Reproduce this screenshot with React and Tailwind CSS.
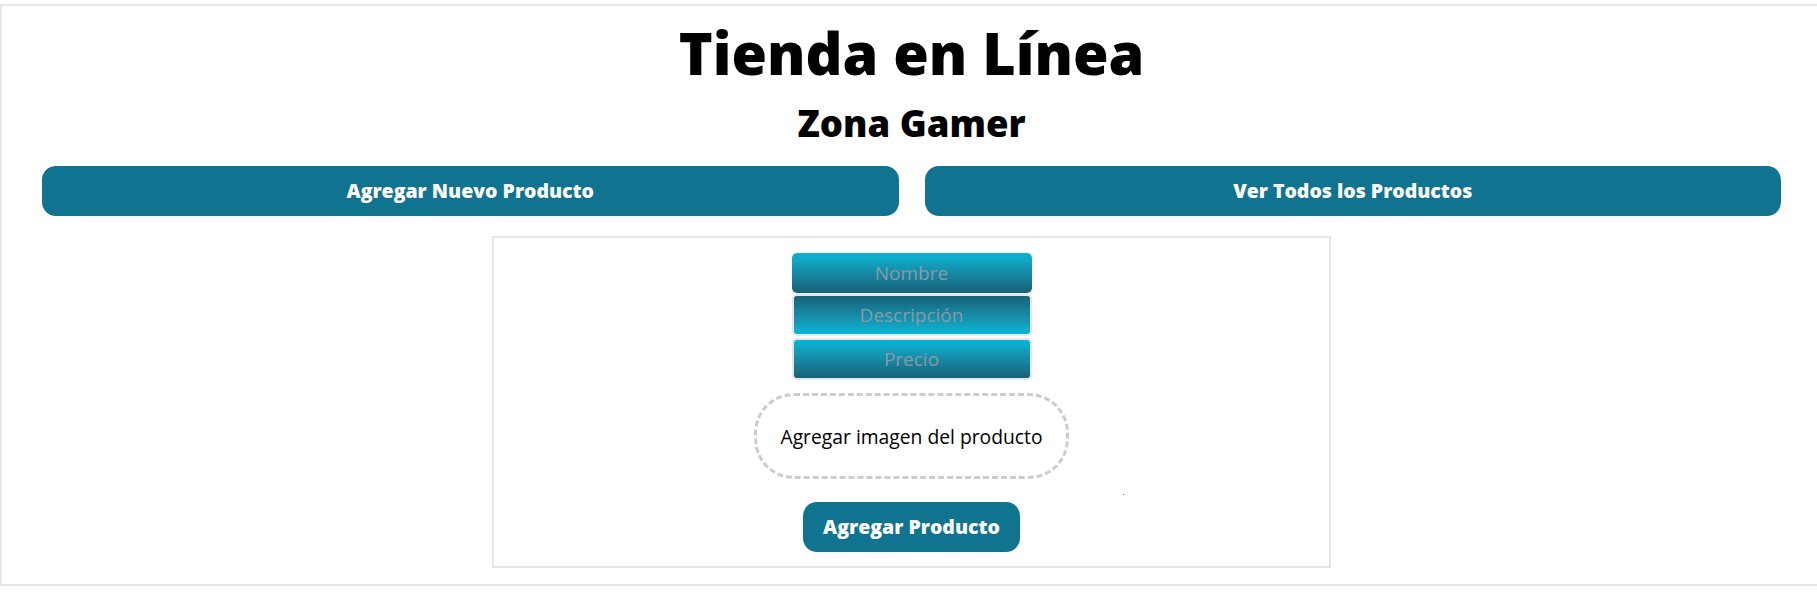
import { useState } from 'react';

const FONT = "font-['Open_Sans','Liberation_Sans',sans-serif]";

const FIELDS = [
  { name: 'nombre', placeholder: 'Nombre', className: 'h-[40px] bg-gradient-to-b from-[#08b6d6] to-[#176178]' },
  {
    name: 'descripcion',
    placeholder: 'Descripción',
    className: 'mt-px h-[42px] border-2 border-[#e6e6ec] bg-gradient-to-b from-[#176178] to-[#08b6d6]',
  },
  {
    name: 'precio',
    placeholder: 'Precio',
    className: 'mt-[2px] h-[42px] border-2 border-[#e6e6ec] bg-gradient-to-b from-[#08b6d6] to-[#176178]',
  },
];

function NavButton({ children, onClick }) {
  return (
    <button
      type="button"
      onClick={onClick}
      className="h-[50px] flex-1 rounded-[14px] bg-[#107491] text-[19.5px] font-extrabold text-white"
    >
      {children}
    </button>
  );
}

export default function App() {
  const [form, setForm] = useState({ nombre: '', descripcion: '', precio: '' });

  const update = (e) => setForm({ ...form, [e.target.name]: e.target.value });

  return (
    <div className={`w-full overflow-hidden bg-white text-black ${FONT}`}>
      <div className="mt-[4px] w-[1823px] border-2 border-[#e5e5ea] pb-[16px]">
        <h1 className="pt-[12px] text-center text-[57.5px] font-extrabold leading-[70px]">Tienda en Línea</h1>
        <h2 className="mt-[12px] text-center text-[36.5px] font-extrabold leading-[46px]">Zona Gamer</h2>

        <div className="mt-[20px] flex gap-[26px] px-[40px]">
          <NavButton>Agregar Nuevo Producto</NavButton>
          <NavButton>Ver Todos los Productos</NavButton>
        </div>

        <form
          onSubmit={(e) => e.preventDefault()}
          className="relative mx-auto mt-[20px] flex h-[332px] w-[839px] flex-col items-center border-2 border-[#e5e5ea] pt-[15px]"
        >
          <div className="flex w-[240px] flex-col">
            {FIELDS.map((f) => (
              <input
                key={f.name}
                name={f.name}
                value={form[f.name]}
                onChange={update}
                placeholder={f.placeholder}
                className={`w-full rounded-[5px] text-center text-[19px] text-white outline-none placeholder:text-[#8a9aa5] ${f.className}`}
              />
            ))}
          </div>

          <label className="mt-[13px] flex h-[86px] w-[315px] cursor-pointer items-center justify-center rounded-[40px] border-[3px] border-dashed border-[#cccccc] pt-[3px] text-[19.3px]">
            Agregar imagen del producto
            <input type="file" accept="image/*" className="hidden" />
          </label>

          <span className="absolute left-[629px] top-[256px] h-px w-px bg-black/60" />

          <button
            type="submit"
            className="mt-[23px] h-[50px] w-[217px] rounded-[14px] bg-[#107491] text-[19.5px] font-extrabold text-white"
          >
            Agregar Producto
          </button>
        </form>
      </div>
    </div>
  );
}
